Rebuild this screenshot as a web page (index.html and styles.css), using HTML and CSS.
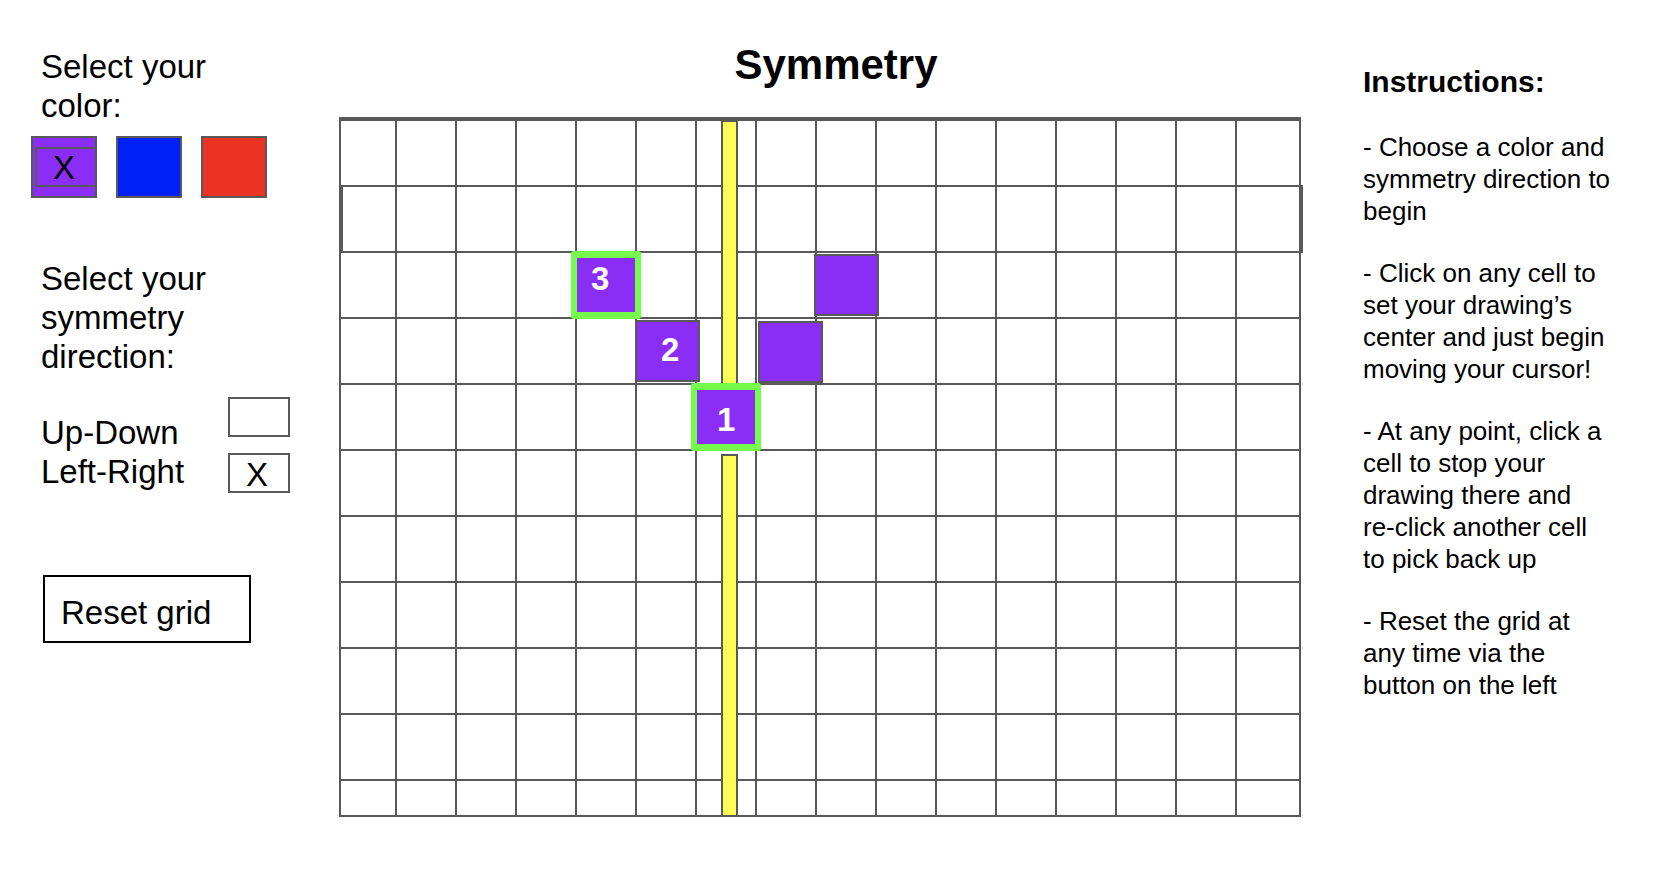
FILE: index.html
```html
<!DOCTYPE html>
<html lang="en">
<head>
<meta charset="utf-8">
<title>Symmetry</title>
<meta name="viewport" content="width=device-width, initial-scale=1">
<link rel="stylesheet" href="styles.css">
</head>
<body>
<div class="page">
  <aside class="controls">
    <h2 class="prompt" id="color-label">Select your color:</h2>
    <div class="swatches" role="group" aria-labelledby="color-label">
      <button class="swatch swatch-purple" type="button" aria-label="Purple" aria-pressed="true"><span class="mark">X</span></button>
      <button class="swatch swatch-blue" type="button" aria-label="Blue" aria-pressed="false"></button>
      <button class="swatch swatch-red" type="button" aria-label="Red" aria-pressed="false"></button>
    </div>
    <h2 class="prompt prompt-direction">Select your symmetry direction:</h2>
    <div class="directions">
      <div class="direction-labels">
        <label for="up-down">Up-Down</label>
        <label for="left-right">Left-Right</label>
      </div>
      <div class="direction-boxes">
        <input class="box" type="checkbox" id="up-down">
        <input class="box" type="checkbox" id="left-right" checked>
      </div>
    </div>
    <button class="reset" type="button">Reset grid</button>
  </aside>

  <main class="stage">
    <h1 class="title">Symmetry</h1>
    <div class="board">
      <div class="cells" id="cells"></div>
      <div class="row-outline"></div>
      <div class="axis axis-top"></div>
      <div class="axis axis-bottom"></div>
      <div class="tile tile-mirror-3"></div>
      <div class="tile tile-mirror-2"></div>
      <div class="tile tile-2">2</div>
      <div class="tile tile-ring tile-3">3</div>
      <div class="tile tile-ring tile-1">1</div>
    </div>
  </main>

  <section class="instructions">
    <h2 class="instructions-title">Instructions:</h2>
    <p>- Choose a color and symmetry direction to begin</p>
    <p>- Click on any cell to set your drawing’s center and just begin moving your cursor!</p>
    <p>- At any point, click a cell to stop your drawing there and<br>re-click another cell to pick back up</p>
    <p>- Reset the grid at any time via the button on the left</p>
  </section>
</div>
<script src="script.js"></script>
</body>
</html>
```
FILE: styles.css
```css
* {
  box-sizing: border-box;
}

body {
  margin: 0;
  background: #fff;
  color: #000;
  font-family: "Liberation Sans", Arial, sans-serif;
}

button {
  font: inherit;
  color: inherit;
  cursor: pointer;
}

h1,
h2,
p {
  margin: 0;
}

.page {
  display: grid;
  grid-template-columns: 339px minmax(0, 1fr) 371px;
}

/* Left controls */
.controls {
  padding: 47px 40px 40px 31px;
  font-size: 33px;
  line-height: 39px;
}

.prompt {
  max-width: 210px;
  padding-left: 10px;
  font-size: 33px;
  font-weight: 400;
}

.swatches {
  display: flex;
  gap: 19px;
  margin-top: 11px;
}

.swatch {
  display: flex;
  align-items: center;
  width: 66px;
  height: 62px;
  padding: 0;
  border: 2px solid #595959;
}

.swatch-purple {
  background: #8a2df5;
}

.swatch-blue {
  background: #0021f5;
}

.swatch-red {
  background: #ea3323;
}

.mark {
  flex: 1;
  height: 40px;
  margin: 0 -2px 0 2px;
  padding-right: 4px;
  border: 2px solid #595959;
  line-height: 38px;
  text-align: center;
}

.prompt-direction {
  margin-top: 61px;
}

.directions {
  display: flex;
  justify-content: space-between;
  width: 259px;
  margin-top: 21px;
  padding-left: 10px;
}

.direction-labels {
  display: flex;
  flex-direction: column;
  padding-top: 16px;
}

.direction-boxes {
  display: flex;
  flex-direction: column;
  gap: 16px;
}

.box {
  appearance: none;
  width: 62px;
  height: 40px;
  margin: 0;
  border: 2px solid #595959;
  background: #fff;
  font: inherit;
  text-align: center;
}

.box:checked::before {
  content: "X";
  display: block;
  margin-right: 4px;
}

.reset {
  display: block;
  margin: 82px 0 0 12px;
  padding: 16px 38px 9px 16px;
  border: 2px solid #000;
  background: #fff;
  line-height: 39px;
}

/* Drawing board */
.title {
  padding: 41px 0 28px 32px;
  font-size: 42px;
  line-height: 48px;
  text-align: center;
}

.board {
  position: relative;
}

.cells {
  display: grid;
  grid-template-columns: 54fr repeat(14, 58fr) 62fr;
  grid-template-rows: repeat(10, 64px) 34px;
  gap: 2px;
  padding: 4px 2px 2px;
  background: #595959;
}

.cell {
  min-width: 0;
  padding: 0;
  border: 0;
  background: #fff;
}

.row-outline {
  position: absolute;
  top: 68px;
  left: 2px;
  width: 100%;
  height: 68px;
  border: 2px solid #595959;
  pointer-events: none;
}

.axis {
  position: absolute;
  left: calc(100% * 382 / 962);
  width: 17px;
  border: 2px solid #595959;
  background: #fffd54;
}

.axis-top {
  top: 3px;
  height: 265px;
}

.axis-bottom {
  top: 337px;
  bottom: 0;
}

.tile {
  position: absolute;
  width: 65px;
  height: 62px;
  border: 2px solid #595959;
  background: #8a2df5;
  color: #fff;
  font-size: 33px;
  font-weight: 700;
  line-height: 39px;
}

.tile-ring {
  width: 70px;
  height: 68px;
  border: 7px solid #75fb4c;
  border-width: 7px 6px;
  border-radius: 3px;
}

.tile-3 {
  top: 134px;
  left: calc(100% * 232 / 962);
  padding: 1px 0 0 14px;
}

.tile-2 {
  top: 203px;
  left: calc(100% * 296 / 962);
  padding: 8px 0 0 24px;
}

.tile-1 {
  top: 266px;
  left: calc(100% * 352 / 962);
  padding: 10px 0 0 20px;
}

.tile-mirror-2 {
  top: 204px;
  left: calc(100% * 419 / 962);
}

.tile-mirror-3 {
  top: 137px;
  left: calc(100% * 475 / 962);
}

/* Instructions */
.instructions {
  display: flex;
  flex-direction: column;
  gap: 30px;
  padding: 65px 59px 40px 62px;
  font-size: 26px;
  line-height: 32px;
}

.instructions-title {
  margin-bottom: 2px;
  font-size: 30px;
  line-height: 34px;
}
```
FILE: script.js
```js
const COLUMNS = 16;
const ROWS = 11;
const cells = document.getElementById("cells");

for (let row = 1; row <= ROWS; row++) {
  for (let column = 1; column <= COLUMNS; column++) {
    const cell = document.createElement("button");
    cell.type = "button";
    cell.className = "cell";
    cell.setAttribute("aria-label", `Row ${row}, column ${column}`);
    cells.append(cell);
  }
}
```
